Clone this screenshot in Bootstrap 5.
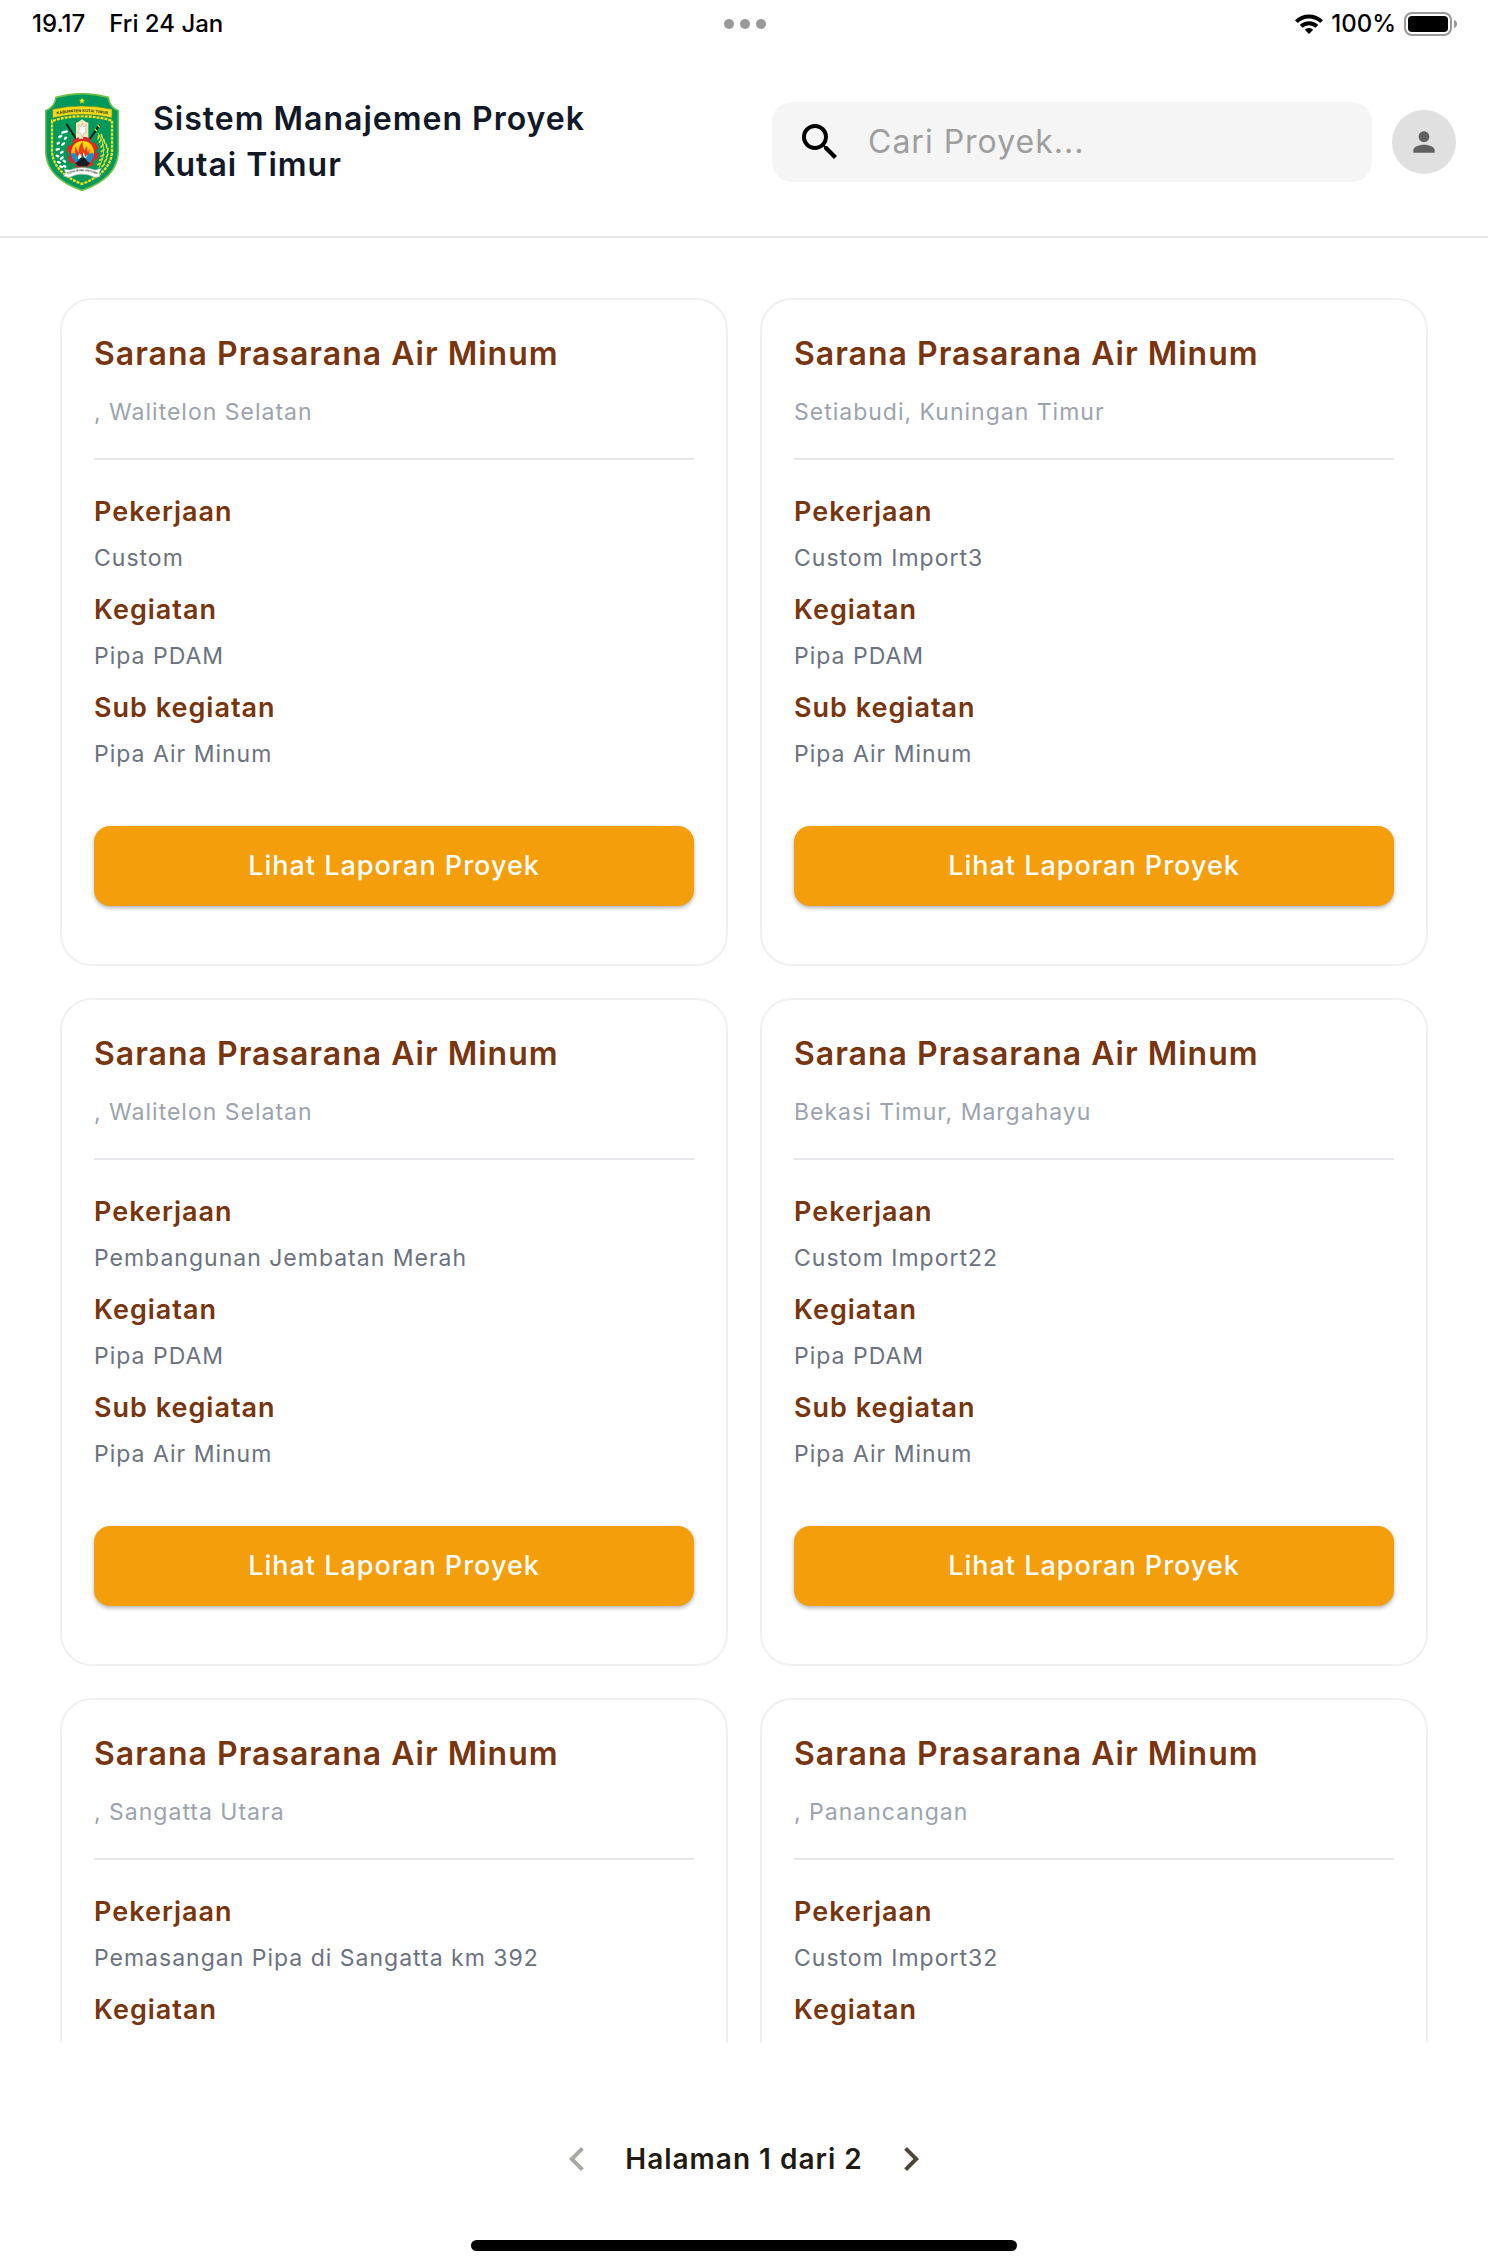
<!DOCTYPE html>
<html lang="id">
<head>
<meta charset="utf-8">
<meta name="viewport" content="width=device-width, initial-scale=1">
<title>Sistem Manajemen Proyek Kutai Timur</title>
<link href="https://cdn.jsdelivr.net/npm/bootstrap@5.3.0/dist/css/bootstrap.min.css" rel="stylesheet">
<style>
  body { font-family: Inter, "Liberation Sans", sans-serif; letter-spacing: 1px; color: #000; background: #fff; }
  svg { display: block; flex: none; letter-spacing: 0; }

  .statusbar { height: 48px; padding: 0 30px 0 32px; font-size: 24px; line-height: 32px; font-weight: 500; letter-spacing: 0; }
  .statusbar .side { flex: 1 1 0; }
  .dots { gap: 6px; }
  .dot { width: 10px; height: 10px; background: #999; }

  .topbar { height: 190px; padding: 0 32px 0 45px; border-bottom: 2px solid #e5e7eb; }
  .brand { font-size: 32px; line-height: 46px; font-weight: 600; color: #111827; margin: 0 auto 0 34px; max-width: 480px; }
  .searchbox { width: 600px; height: 80px; border-radius: 20px; background: #f5f5f5; padding: 0 24px; gap: 24px; }
  .searchbox .form-control { border: 0; background: none; box-shadow: none; padding: 0; font-size: 32px; line-height: 44px; letter-spacing: inherit; color: #212121; }
  .searchbox .form-control::placeholder { color: #9e9e9e; opacity: 1; }
  .avatar { width: 64px; height: 64px; background: #e0e0e0; border: 0; padding: 0; margin-left: 20px; }

  .list-area { overflow-y: auto; min-height: 0; scrollbar-width: none; padding: 60px 60px 0; }
  .list-area::-webkit-scrollbar { display: none; }
  .project-grid { --bs-gutter-x: 32px; --bs-gutter-y: 32px; }
  .project { min-height: 668px; border: 2px solid #f0f0f0; border-radius: 32px; padding: 32px 32px 58px; }
  .project h2 { font-size: 32px; line-height: 44px; font-weight: 600; color: #78350f; margin: 0 0 18px; }
  .place { font-size: 23px; line-height: 36px; color: #9ca3af; margin: 0; padding-bottom: 28px; border-bottom: 2px solid #e5e7eb; }
  .project dl { margin: 32px 0 0; }
  .project dt { font-size: 27px; line-height: 40px; font-weight: 600; color: #78350f; margin-bottom: 8px; }
  .project dd { font-size: 23px; line-height: 36px; color: #6b7280; margin: 0 0 14px; }
  .btn-report { --bs-btn-color: #fff; --bs-btn-bg: #f59e0b; --bs-btn-hover-color: #fff; --bs-btn-hover-bg: #d98a06; --bs-btn-active-color: #fff; --bs-btn-active-bg: #d98a06;
    height: 80px; margin-top: 40px; border: 0; border-radius: 16px; font-size: 27px; line-height: 40px; font-weight: 500; letter-spacing: inherit; box-shadow: 0 2px 4px rgba(0,0,0,.3); }

  .pager { padding-top: 92px; font-size: 28px; line-height: 48px; font-weight: 600; color: #1f1b13; gap: 24px; }
  .pager button { border: 0; background: none; padding: 0; color: #4d4639; }
  .pager button:disabled { color: #aaa8a3; }
  .home-indicator { width: 546px; height: 11px; border-radius: 6px; background: #000; margin: 57px auto 15px; }
</style>
</head>
<body class="vh-100 d-flex flex-column">

<div class="statusbar d-flex align-items-center flex-shrink-0">
  <div class="side d-flex gap-4"><span>19.17</span><span>Fri 24 Jan</span></div>
  <div class="dots d-flex" aria-hidden="true">
    <span class="dot rounded-circle"></span><span class="dot rounded-circle"></span><span class="dot rounded-circle"></span>
  </div>
  <div class="side d-flex justify-content-end align-items-center gap-2">
    <svg width="28" height="20" viewBox="0 0 28 20" aria-hidden="true" fill="none" stroke="#000" stroke-width="4">
      <path d="M1.4 7.6a18 18 0 0 1 25.2 0"/><path d="M6.2 12.4a11.2 11.2 0 0 1 15.6 0"/>
      <path d="M14 20l-4.2-4.2a6 6 0 0 1 8.4 0z" fill="#000" stroke="none"/>
    </svg>
    <span>100%</span>
    <svg width="54" height="24" viewBox="0 0 54 24" aria-hidden="true">
      <rect x="1" y="1" width="46" height="22" rx="7" fill="none" stroke="#999" stroke-width="2"/>
      <rect x="4" y="4" width="40" height="16" rx="4" fill="#000"/>
      <path d="M50 8c2 .5 3 2 3 4s-1 3.500-3 4z" fill="#999"/>
    </svg>
  </div>
</div>

<header class="topbar flex-shrink-0 d-flex align-items-center">
  <svg width="74" height="98" viewBox="45 23 222 294" role="img" aria-label="Lambang Kabupaten Kutai Timur">
    <defs>
      <path id="ribbonTop" d="M72 89Q156 71 242 89"/>
      <path id="ribbonLow" d="M114 267Q156 248 200 267"/>
      <linearGradient id="sunrise" x1="0" y1="0" x2="0" y2="1"><stop offset="0" stop-color="#ffe600"/><stop offset="1" stop-color="#f7941a"/></linearGradient>
    </defs>
    <path d="M78 36Q156 14 235 36Q238 66 265 76V196Q264 278 156 315Q48 278 47 196V76Q74 66 78 36Z" fill="#00995b" stroke="#6cc04a" stroke-width="5"/>
    <path d="M156 37l3 6 6 1-5 4 2 7-6-4-6 4 2-7-5-4 6-1z" fill="#ffe600"/>
    <path d="M68 72Q156 52 246 72V97Q156 77 68 97Z" fill="#f4dc1c" stroke="#7b8c18" stroke-width="2"/>
    <text font-family="Liberation Sans, sans-serif" font-size="12" font-weight="700" fill="#22300f"><textPath href="#ribbonTop" startOffset="50%" text-anchor="middle">KABUPATEN KUTAI TIMUR</textPath></text>
    <path d="M69 106Q110 93 156 93Q203 93 246 106V198Q243 262 156 296Q70 262 66 198V106Z" fill="none" stroke="#f4dc1c" stroke-width="7" stroke-dasharray="9 3"/>
    <path d="M111 118l42 66M207 121l-44 64" stroke="#101a14" stroke-width="6" stroke-linecap="round"/>
    <path d="M203 118l6 8M195 131l5 6" stroke="#f4dc1c" stroke-width="4"/>
    <path d="M138 160V112l7-2 11-8 12 8 7 2v48z" fill="#f5e9bd"/>
    <path d="M146 118l7 7 4-12 4 12 8-7-3 15 4 8-9 3-4 12-5-12-9-3 5-8z" fill="#fff" stroke="#d9a59b" stroke-width="2"/>
    <path d="M97 142l13-4M88 155l6-4M105 160l3-3M83 175l4-3M97 178l5-4M80 193l6-2M93 202l5-3M80 211l5 2M93 220l5-4M84 230l5 2M101 226l4 3M91 243l5 2M102 242l4 2" fill="none" stroke="#fff" stroke-width="7" stroke-linecap="round"/>
    <path d="M204 143Q238 192 206 249" fill="none" stroke="#c8df2e" stroke-width="3"/>
    <path d="M207 151l-3 9M214 148l3 10M213 164l-5 7M221 162l3 11M219 178l-6 7M229 176l1 11M222 193l-8 6M234 190l-2 11M221 208l-8 5M234 206l-5 10M217 221l-8 4M230 221l-7 9M211 234l-8 4M223 236l-7 8" fill="none" stroke="#e4df35" stroke-width="5" stroke-linecap="round"/>
    <circle cx="158" cy="202" r="42" fill="none" stroke="#db2929" stroke-width="12" stroke-dasharray="21 12"/>
    <circle cx="158" cy="202" r="41" fill="#db2929"/>
    <circle cx="158" cy="201" r="34" fill="url(#sunrise)"/>
    <path d="M124 204h68a34 34 0 0 1-68 0z" fill="#168fc8"/>
    <path d="M142 215q-12-20-5-32 2 12 9 19-1-20 13-34-3 14 5 29 1-9 7-15 0 14 3 20 1-8 6-12-1 14-11 25z" fill="#ec3a20"/>
    <path d="M144 215l5-12 7 12 5-14 5 14 8-7-8 12h-23z" fill="#fff"/>
    <path d="M153 219l5-14 5 14z" fill="#187a42"/>
    <path d="M136 234q10-6 15-17h14q5 11 15 17l-9 9h-26z" fill="#171d22"/>
    <path d="M102 251l17 3Q156 239 196 254l18-5-7 14 3 11-16 2Q156 257 119 276l-18-3 6-11z" fill="#fff" stroke="#9aaca3" stroke-width="2"/>
    <text font-family="Liberation Sans, sans-serif" font-size="9" font-weight="700" fill="#333"><textPath href="#ribbonLow" startOffset="50%" text-anchor="middle">TUAH BUMI UNTUNG</textPath></text>
  </svg>
  <h1 class="brand">Sistem Manajemen Proyek Kutai Timur</h1>
  <div class="searchbox d-flex align-items-center">
    <label for="cari" aria-label="Cari proyek">
      <svg width="48" height="48" viewBox="0 0 24 24"><path d="M15.500 14h-.79l-.28-.27A6.471 6.471 0 0 0 16 9.500 6.500 6.500 0 1 0 9.500 16c1.610 0 3.090-.59 4.230-1.570l.27.28v.79l5 4.990L20.490 19l-4.990-5zm-6 0C7.010 14 5 11.990 5 9.500S7.010 5 9.500 5 14 7.010 14 9.500 11.990 14 9.500 14z"/></svg>
    </label>
    <input id="cari" class="form-control" type="search" placeholder="Cari Proyek...">
  </div>
  <button class="avatar rounded-circle d-flex align-items-center justify-content-center" type="button" aria-label="Profil">
    <svg width="32" height="32" viewBox="0 0 24 24" fill="#616161"><path d="M12 12c2.210 0 4-1.790 4-4s-1.790-4-4-4-4 1.790-4 4 1.790 4 4 4zm0 2c-2.670 0-8 1.340-8 4v2h16v-2c0-2.660-5.330-4-8-4z"/></svg>
  </button>
</header>

<main class="list-area flex-grow-1">
  <div class="row row-cols-2 project-grid">
    <div class="col">
      <article class="project h-100">
        <h2>Sarana Prasarana Air Minum</h2>
        <p class="place">, Walitelon Selatan</p>
        <dl><dt>Pekerjaan</dt><dd>Custom</dd><dt>Kegiatan</dt><dd>Pipa PDAM</dd><dt>Sub kegiatan</dt><dd>Pipa Air Minum</dd></dl>
        <button class="btn btn-report w-100" type="button">Lihat Laporan Proyek</button>
      </article>
    </div>
    <div class="col">
      <article class="project h-100">
        <h2>Sarana Prasarana Air Minum</h2>
        <p class="place">Setiabudi, Kuningan Timur</p>
        <dl><dt>Pekerjaan</dt><dd>Custom Import3</dd><dt>Kegiatan</dt><dd>Pipa PDAM</dd><dt>Sub kegiatan</dt><dd>Pipa Air Minum</dd></dl>
        <button class="btn btn-report w-100" type="button">Lihat Laporan Proyek</button>
      </article>
    </div>
    <div class="col">
      <article class="project h-100">
        <h2>Sarana Prasarana Air Minum</h2>
        <p class="place">, Walitelon Selatan</p>
        <dl><dt>Pekerjaan</dt><dd>Pembangunan Jembatan Merah</dd><dt>Kegiatan</dt><dd>Pipa PDAM</dd><dt>Sub kegiatan</dt><dd>Pipa Air Minum</dd></dl>
        <button class="btn btn-report w-100" type="button">Lihat Laporan Proyek</button>
      </article>
    </div>
    <div class="col">
      <article class="project h-100">
        <h2>Sarana Prasarana Air Minum</h2>
        <p class="place">Bekasi Timur, Margahayu</p>
        <dl><dt>Pekerjaan</dt><dd>Custom Import22</dd><dt>Kegiatan</dt><dd>Pipa PDAM</dd><dt>Sub kegiatan</dt><dd>Pipa Air Minum</dd></dl>
        <button class="btn btn-report w-100" type="button">Lihat Laporan Proyek</button>
      </article>
    </div>
    <div class="col">
      <article class="project h-100">
        <h2>Sarana Prasarana Air Minum</h2>
        <p class="place">, Sangatta Utara</p>
        <dl><dt>Pekerjaan</dt><dd>Pemasangan Pipa di Sangatta km 392</dd><dt>Kegiatan</dt></dl>
      </article>
    </div>
    <div class="col">
      <article class="project h-100">
        <h2>Sarana Prasarana Air Minum</h2>
        <p class="place">, Panancangan</p>
        <dl><dt>Pekerjaan</dt><dd>Custom Import32</dd><dt>Kegiatan</dt></dl>
      </article>
    </div>
  </div>
</main>

<footer class="flex-shrink-0">
  <nav class="pager d-flex justify-content-center align-items-center" aria-label="Halaman">
    <button type="button" disabled aria-label="Sebelumnya"><svg width="48" height="48" viewBox="0 0 24 24" fill="currentColor"><path d="M15.410 7.410 14 6l-6 6 6 6 1.410-1.410L10.830 12z"/></svg></button>
    <span>Halaman 1 dari 2</span>
    <button type="button" aria-label="Berikutnya"><svg width="48" height="48" viewBox="0 0 24 24" fill="currentColor"><path d="M10 6 8.590 7.410 13.170 12l-4.580 4.590L10 18l6-6z"/></svg></button>
  </nav>
  <div class="home-indicator"></div>
</footer>

<script src="https://cdn.jsdelivr.net/npm/bootstrap@5.3.0/dist/js/bootstrap.bundle.min.js"></script>
</body>
</html>
